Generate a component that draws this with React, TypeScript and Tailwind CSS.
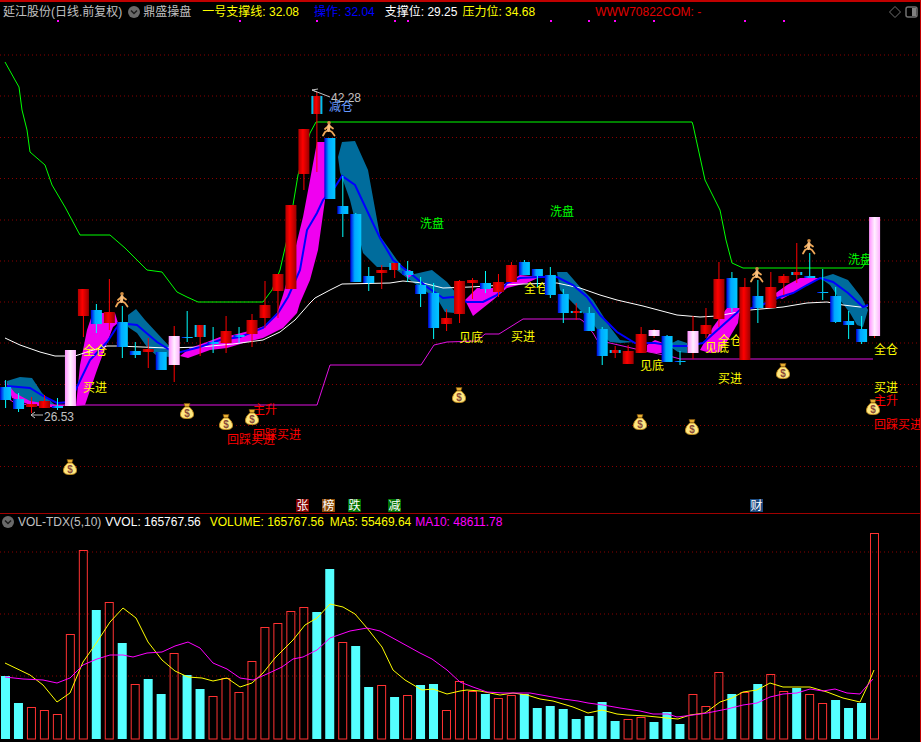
import React from 'react'

const FONT = '"Liberation Sans","Noto Sans CJK SC",sans-serif'

// kline pixel data: [kind, bodyTop, bodyBottom, wickTop, wickBottom]
// r = red, b = blue, p = pink, m = red with cyan sides
type Candle = [string, number, number, number, number]

const candles: Candle[] = [
  ['b', 387, 400, 380, 408], ['b', 399, 409, 393, 412], ['r', 404, 407, 397, 413], ['r', 401, 408, 395, 408],
  ['b', 406, 408, 398, 410], ['p', 350, 406, 350, 406], ['r', 289, 316, 289, 337], ['b', 310, 324, 304, 333],
  ['r', 312, 323, 279, 330], ['b', 322, 347, 306, 358], ['b', 351, 355, 342, 358], ['r', 349, 352, 338, 368],
  ['b', 352, 370, 352, 370], ['p', 336, 365, 326, 382], ['b', 337, 338, 311, 342], ['m', 325, 337, 325, 356],
  ['b', 342, 344, 327, 353], ['r', 331, 343, 316, 353], ['b', 335, 337, 327, 343], ['r', 320, 334, 314, 347],
  ['r', 305, 318, 281, 328], ['r', 274, 291, 274, 318], ['r', 205, 289, 205, 289], ['r', 129, 174, 129, 190],
  ['m', 96, 114, 92, 172], ['b', 138, 199, 138, 199], ['b', 206, 214, 176, 237], ['b', 214, 282, 213, 282],
  ['b', 276, 283, 267, 291], ['r', 270, 273, 265, 289], ['m', 263, 270, 263, 278], ['b', 271, 275, 261, 282],
  ['b', 285, 294, 277, 307], ['b', 293, 328, 283, 339], ['r', 318, 324, 309, 331], ['r', 281, 314, 280, 323],
  ['r', 280, 283, 278, 299], ['b', 283, 289, 271, 293], ['r', 282, 292, 274, 297], ['r', 265, 282, 262, 282],
  ['b', 262, 275, 260, 275], ['b', 269, 276, 269, 287], ['b', 275, 295, 267, 298], ['b', 294, 313, 289, 323],
  ['m', 311, 313, 303, 320], ['b', 313, 331, 307, 331], ['b', 329, 356, 327, 365], ['m', 350, 353, 346, 358],
  ['r', 351, 364, 345, 364], ['r', 334, 353, 327, 353], ['p', 330, 336, 329, 338], ['b', 336, 362, 335, 362],
  ['b', 361, 362, 351, 365], ['p', 331, 353, 316, 359], ['r', 325, 334, 308, 338], ['r', 279, 319, 262, 327],
  ['b', 278, 308, 272, 312], ['r', 287, 360, 278, 360], ['b', 296, 308, 280, 323], ['r', 287, 308, 272, 308],
  ['r', 276, 283, 274, 295], ['m', 272, 275, 243, 283], ['b', 276, 278, 253, 278], ['b', 292, 293, 269, 300],
  ['b', 296, 322, 287, 323], ['b', 321, 325, 311, 339], ['b', 329, 342, 316, 344], ['p', 217, 336, 217, 338],
]

// volume bars: [kind, top]
const volumes: [string, number][] = [
  ['c', 676], ['c', 703], ['r', 707], ['r', 710], ['r', 714], ['r', 634], ['r', 550], ['c', 610], ['r', 602], ['c', 643],
  ['r', 684], ['c', 679], ['c', 694], ['r', 653], ['c', 675], ['c', 689], ['r', 696], ['r', 678], ['r', 692], ['r', 661],
  ['r', 627], ['r', 623], ['r', 611], ['r', 607], ['c', 612], ['c', 569], ['r', 642], ['c', 646], ['c', 687], ['r', 685],
  ['c', 697], ['r', 695], ['c', 685], ['c', 684], ['r', 710], ['r', 681], ['r', 691], ['c', 694], ['r', 698], ['r', 695],
  ['c', 694], ['c', 708], ['c', 706], ['c', 709], ['c', 719], ['c', 716], ['c', 702], ['c', 721], ['r', 719], ['r', 717],
  ['c', 722], ['c', 712], ['c', 724], ['r', 694], ['r', 706], ['r', 672], ['c', 694], ['r', 692], ['c', 684], ['r', 674],
  ['r', 691], ['c', 688], ['r', 694], ['r', 703], ['c', 700], ['c', 708], ['c', 703], ['r', 533],
]

const volLeft = (i: number) => 1 + i * 12.97
const candleX = (i: number) => 5.6 + i * 12.97

const gridMain = [55, 96, 137.5, 178.5, 220, 261, 302, 343, 384.5, 425.5, 466.5]
const ticks = [57, 239, 316, 394, 407, 550, 588, 614, 653, 744, 783]

const green = '5,62 15,80 19,87 22,110 27,130 30,152 45,165 52,185 65,207 80,235 110,235 125,248 147,270 162,272 177,292 187,297 198,302 263,302 272,290 280,270 288,235 293,205 298,175 310,133 316,122 692,122 693,125 705,180 720,210 726,240 732,263 743,268 862,268 864,265 868,260'
const white = '5,338 20,345 40,352 55,356 75,356 90,351 107,346 117,346 167,348 200,347 233,344 263,340 280,332 295,320 310,303 315,298 330,290 342,284 390,283 403,281 423,283 443,288 470,287 523,284 557,283 580,288 600,295 617,300 643,306 677,315 700,317 717,316 733,313 750,310 783,307 807,303 827,302 843,305 860,307 868,306'
const support = '5,381 7,398 15,403 30,405 317,405 330,365 421,365 434,345 447,342 477,341 485,334 499,334 523,319 580,319 583,321 593,333 597,340 640,350 673,357 680,359 873,359'
const blueLine = '7,386 30,388 43,396 57,403 70,402 77,387 90,360 107,342 117,327 128,324 137,325 157,342 170,350 177,353 200,347 220,340 240,337 263,328 278,313 288,297 300,270 307,230 317,213 323,200 335,187 342,176 355,185 370,217 380,238 393,260 410,273 427,287 443,298 453,297 467,302 483,302 497,295 507,283 520,278 540,277 557,277 573,285 587,297 600,315 617,332 635,343 655,343 672,346 687,346 703,343 723,325 740,310 757,307 780,297 793,293 807,285 820,278 833,282 848,293 863,307 868,305'

const teal = [
  '7,381 20,377 32,378 42,393 55,405 40,405 27,403 13,396 7,385',
  '128,315 136,309 145,320 157,333 170,347 170,357 157,356 147,347 137,333 128,327',
  '338,157 342,142 355,141 368,170 380,236 390,250 397,260 410,275 432,270 447,282 456,293 464,314 445,312 438,300 414,283 403,275 393,267 377,267 363,253 350,200 340,172',
  '557,272 567,272 580,287 593,300 610,327 620,340 635,342 620,343 610,342 600,333 590,320 575,305 560,290',
  '672,343 678,340 687,343 687,353 678,352 672,348',
  '820,278 833,274 848,280 862,298 868,310 863,327 857,325 850,313 840,300 830,285',
]

const magenta = [
  '7,383 15,393 30,401 55,405 65,405 60,408 30,405 12,398',
  '76,406 80,365 87,330 92,315 100,313 115,313 118,323 113,327 107,343 97,370 85,405',
  '180,356 190,348 207,342 220,337 233,335 253,330 267,325 277,313 283,295 290,270 303,217 310,180 317,142 325,142 325,200 318,250 310,280 300,303 297,313 283,328 263,338 247,342 227,348 210,350 188,358',
  '403,271 410,270 414,274 408,278',
  '465,300 477,288 493,288 507,283 520,275 540,277 527,283 507,288 493,300 473,316',
  '647,345 655,340 663,343 663,353 655,353 647,352',
  '700,350 713,327 727,308 740,308 738,323 728,340 720,352 710,353',
  '773,295 787,285 800,278 820,278 807,285 793,293 782,299',
]

const volYellow = '5,663 30,675 43,685 57,702 70,693 83,662 97,642 110,622 123,608 136,618 148,642 162,660 175,671 188,677 202,678 213,681 227,678 240,687 252,683 263,673 275,658 293,640 305,625 317,618 330,604 343,607 355,614 367,628 382,647 393,670 405,680 422,690 433,689 447,694 460,691 467,690 480,691 500,695 513,693 527,695 540,699 553,701 573,707 588,713 602,710 617,714 627,715 647,716 667,718 678,719 690,715 705,713 720,702 732,698 743,692 757,690 770,683 783,687 810,687 827,692 843,698 860,702 867,687 874,670'
const volMagenta = '5,677 23,679 43,680 57,683 70,678 83,665 97,659 110,655 123,655 133,657 147,653 162,652 175,646 188,642 200,648 213,663 227,669 240,678 253,680 267,674 282,667 293,659 303,657 317,650 330,638 350,631 367,628 380,631 400,642 420,653 432,659 447,670 460,682 473,687 487,692 503,693 530,693 547,696 563,699 578,701 588,703 603,705 620,708 640,711 653,714 668,714 677,717 693,715 707,713 727,709 743,705 757,703 770,697 783,694 797,693 810,689 823,691 835,689 847,693 860,694 865,688 873,679'

function RunningMan({ x, y }: { x: number; y: number }) {
  return (
    <g transform={`translate(${x - 7} ${y - 8})`}>
      <circle cx="7" cy="1.8" r="1.8" fill="#d08c40" />
      <path d="M6.5 9 L3 11 L1 14.5 M6.5 9 L10 11 L12.5 14.5 M7.5 5 L11 7.5 M6.5 5 L3 8" fill="none" stroke="#f0a858" strokeWidth="1.8" strokeLinecap="round" strokeLinejoin="round" />
      <path d="M7 4.5 L6.5 9.5" stroke="#f8c080" strokeWidth="3" strokeLinecap="round" />
    </g>
  )
}

function MoneyBag({ x, y }: { x: number; y: number }) {
  return (
    <g transform={`translate(${x - 7} ${y - 8})`}>
      <path d="M4 0.5 L10 0.5 L9 3.5 L5 3.5 Z" fill="#e8b030" stroke="#80500c" strokeWidth="0.6" />
      <path d="M5 4 C2 6 0.5 9 0.5 11.5 C0.5 14.5 3 15.5 7 15.5 C11 15.5 13.5 14.5 13.5 11.5 C13.5 9 12 6 9 4 Z" fill="#ffe880" stroke="#c89020" strokeWidth="1" />
      <text x="7" y="13.5" textAnchor="middle" fontSize="10" fontWeight="700" fontFamily={FONT} fill="#8a4838">$</text>
    </g>
  )
}

function Label({ x, y, color, children }: { x: number; y: number; color: string; children: string }) {
  return (
    <text x={x} y={y} fontSize="12" fontFamily={FONT} fill={color}>
      {children}
    </text>
  )
}

function Chip({ x, color, children }: { x: number; color: string; children: string }) {
  return (
    <g>
      <rect x={x} y="499" width="13" height="13" fill={color} />
      <text x={x + 0.5} y="510" fontSize="12" fontFamily={FONT} fill="#fff">
        {children}
      </text>
    </g>
  )
}

function Gradients() {
  return (
    <defs>
      <linearGradient id="red">
        <stop offset="0" stopColor="#b00000" />
        <stop offset="0.4" stopColor="#ff0000" />
        <stop offset="1" stopColor="#9a0000" />
      </linearGradient>
      <linearGradient id="blue">
        <stop offset="0" stopColor="#0000e0" />
        <stop offset="0.4" stopColor="#00a8ff" />
        <stop offset="1" stopColor="#00c8ff" />
      </linearGradient>
      <linearGradient id="pink">
        <stop offset="0" stopColor="#ff90ff" />
        <stop offset="0.5" stopColor="#fff0ff" />
        <stop offset="1" stopColor="#ffb0ff" />
      </linearGradient>
    </defs>
  )
}

function KLine({ c, i }: { c: Candle; i: number }) {
  const [kind, top, bottom, hi, lo] = c
  const x = candleX(i)
  const wick = kind === 'b' ? '#00ffff' : '#ff0000'
  const h = bottom - top
  return (
    <g>
      <line x1={x} x2={x} y1={hi} y2={lo} stroke={wick} strokeWidth="1" />
      {kind === 'm' && <rect x={x - 5.5} y={top} width="11" height={h} fill="#00c0f0" />}
      {kind === 'm' && <rect x={x - 3.5} y={top} width="7" height={h} fill="url(#red)" />}
      {kind === 'r' && <rect x={x - 5.5} y={top} width="11" height={h} fill="url(#red)" />}
      {kind === 'b' && <rect x={x - 5.5} y={top} width="11" height={h} fill="url(#blue)" />}
      {kind === 'p' && <rect x={x - 5.5} y={top} width="11" height={h} fill="url(#pink)" />}
    </g>
  )
}

function MainChart() {
  return (
    <svg className="block w-full h-[491px]" viewBox="0 22 920 491">
      <Gradients />
      {gridMain.map((y) => (
        <line key={y} x1="0" x2="920" y1={y} y2={y} stroke="#8a0000" strokeDasharray="1 3" />
      ))}
      {teal.map((p) => (
        <polygon key={p} points={p} fill="#006c9c" />
      ))}
      {magenta.map((p) => (
        <polygon key={p} points={p} fill="#f000f0" />
      ))}
      <polyline points={green} fill="none" stroke="#00ff00" strokeWidth="1" />
      <polyline points={white} fill="none" stroke="#ffffff" strokeWidth="1" />
      <polyline points={support} fill="none" stroke="#e010e0" strokeWidth="1" />
      <polyline points={blueLine} fill="none" stroke="#0000ff" strokeWidth="2" />

      <Label x={420} y={228} color="#00ff00">洗盘</Label>
      <Label x={550} y={216} color="#00ff00">洗盘</Label>
      <Label x={848} y={264} color="#00ff00">洗盘</Label>
      <Label x={83} y={355} color="#ffff00">全仓</Label>
      <Label x={83} y={392} color="#ffff00">买进</Label>
      <Label x={524} y={293} color="#ffff00">全仓</Label>
      <Label x={459} y={342} color="#ffff00">见底</Label>
      <Label x={511} y={341} color="#ffff00">买进</Label>
      <Label x={640} y={370} color="#ffff00">见底</Label>
      <Label x={705} y={352} color="#ffff00">见底</Label>
      <Label x={718} y={345} color="#ffff00">全仓</Label>
      <Label x={718} y={383} color="#ffff00">买进</Label>
      <Label x={874} y={354} color="#ffff00">全仓</Label>
      <Label x={874} y={392} color="#ffff00">买进</Label>
      <Label x={253} y={414} color="#ff0000">主升</Label>
      <Label x={874} y={405} color="#ff0000">主升</Label>
      <Label x={253} y={439} color="#ff0000">回踩买进</Label>
      <Label x={227} y={444} color="#ff0000">回踩买进</Label>
      <Label x={874} y={429} color="#ff0000">回踩买进</Label>

      {candles.map((c, i) => (
        <KLine key={i} c={c} i={i} />
      ))}

      <path d="M317 92 L312 90 L318 89 M312 90 L330 97" fill="none" stroke="#c0c0c0" strokeWidth="1" />
      <text x={331} y={102} fontSize="12" fontFamily={FONT} fill="#c0c0c0">42.28</text>
      <Label x={329} y={111} color="#6699ff">减仓</Label>
      <path d="M31 415 L43 415 M31 415 L35 412 M31 415 L35 418" fill="none" stroke="#c0c0c0" strokeWidth="1" />
      <text x={44} y={421} fontSize="12" fontFamily={FONT} fill="#c0c0c0">26.53</text>

      <RunningMan x={122} y={300} />
      <RunningMan x={329} y={129} />
      <RunningMan x={757} y={275} />
      <RunningMan x={809} y={247} />

      <MoneyBag x={187} y={411} />
      <MoneyBag x={226} y={422} />
      <MoneyBag x={252} y={417} />
      <MoneyBag x={70} y={467} />
      <MoneyBag x={459} y={395} />
      <MoneyBag x={640} y={422} />
      <MoneyBag x={692} y={427} />
      <MoneyBag x={783} y={371} />
      <MoneyBag x={873} y={407} />

      <Chip x={296} color="#800000">张</Chip>
      <Chip x={322} color="#8a4a08">榜</Chip>
      <Chip x={348} color="#007000">跌</Chip>
      <Chip x={388} color="#007000">减</Chip>
      <Chip x={750} color="#1c4a80">财</Chip>
    </svg>
  )
}

function VolumeChart() {
  return (
    <svg className="block w-full h-[212px]" viewBox="0 530 920 212">
      {[552, 614, 676].map((y) => (
        <line key={y} x1="0" x2="920" y1={y} y2={y} stroke="#8a0000" strokeDasharray="1 3" />
      ))}
      {volumes.map(([kind, top], i) =>
        kind === 'c' ? (
          <rect key={i} x={volLeft(i)} y={top} width="9" height={739 - top} fill="#54ffff" />
        ) : (
          <rect key={i} x={volLeft(i) + 0.5} y={top + 0.5} width="8" height={738.5 - top} fill="none" stroke="#ff3232" strokeWidth="1" />
        ),
      )}
      <polyline points={volYellow} fill="none" stroke="#ffff00" strokeWidth="1" />
      <polyline points={volMagenta} fill="none" stroke="#ff00ff" strokeWidth="1" />
    </svg>
  )
}

function ChevronDot() {
  return (
    <svg width="12" height="12" viewBox="0 0 12 12" className="shrink-0">
      <circle cx="6" cy="6" r="6" fill="#6a6a6a" />
      <path d="M3 4.5 L6 7.5 L9 4.5" fill="none" stroke="#1c1c1c" strokeWidth="1.5" />
    </svg>
  )
}

export default function App() {
  return (
    <div className="relative w-[921px] h-[742px] bg-black overflow-hidden border-t-2 border-r border-[#c00000] text-[12px] leading-none" style={{ fontFamily: FONT }}>
      <div className="h-[20px] flex items-center pl-[3px] whitespace-nowrap">
        <span className="text-[#c0c0c0]">延江股份(日线.前复权)</span>
        <span className="ml-[6px]"><ChevronDot /></span>
        <span className="ml-[3px] text-[#c0c0c0]">鼎盛操盘</span>
        <span className="ml-[11px] text-[#ffff00]">一号支撑线: 32.08</span>
        <span className="ml-[15px] text-[#0000ff]">操作: 32.04</span>
        <span className="ml-[10px] text-white">支撑位: 29.25</span>
        <span className="ml-[5px] text-[#ffff00]">压力位: 34.68</span>
        <span className="ml-[60px] text-[#e00000]">WWW70822COM: -</span>
        <svg width="14" height="14" viewBox="0 0 14 14" className="ml-auto">
          <path d="M7 1.5 L12.5 7 L7 12.5 L1.5 7 Z" fill="none" stroke="#707070" strokeWidth="1" />
        </svg>
        <svg width="13" height="12" viewBox="0 0 13 12" className="ml-[3px] mr-[2px]">
          <rect x="1" y="1" width="11" height="10" rx="2" fill="none" stroke="#707070" strokeWidth="1.5" />
          <rect x="7" y="2" width="4" height="8" fill="#808080" />
        </svg>
      </div>
      {ticks.map((x) => (
        <span key={x} className="absolute top-[18px] w-[2px] h-[2px] bg-[#ff00ff]" style={{ left: x }} />
      ))}
      <MainChart />
      <div className="h-[17px] flex items-center pl-[2px] border-t border-[#a00000] whitespace-nowrap">
        <ChevronDot />
        <span className="ml-[4px] text-[#c0c0c0]">VOL-TDX(5,10)</span>
        <span className="ml-[4px] text-white">VVOL: 165767.56</span>
        <span className="ml-[9px] text-[#ffff00]">VOLUME: 165767.56</span>
        <span className="ml-[6px] text-[#ffff00]">MA5: 55469.64</span>
        <span className="ml-[4px] text-[#ff00ff]">MA10: 48611.78</span>
      </div>
      <VolumeChart />
    </div>
  )
}
